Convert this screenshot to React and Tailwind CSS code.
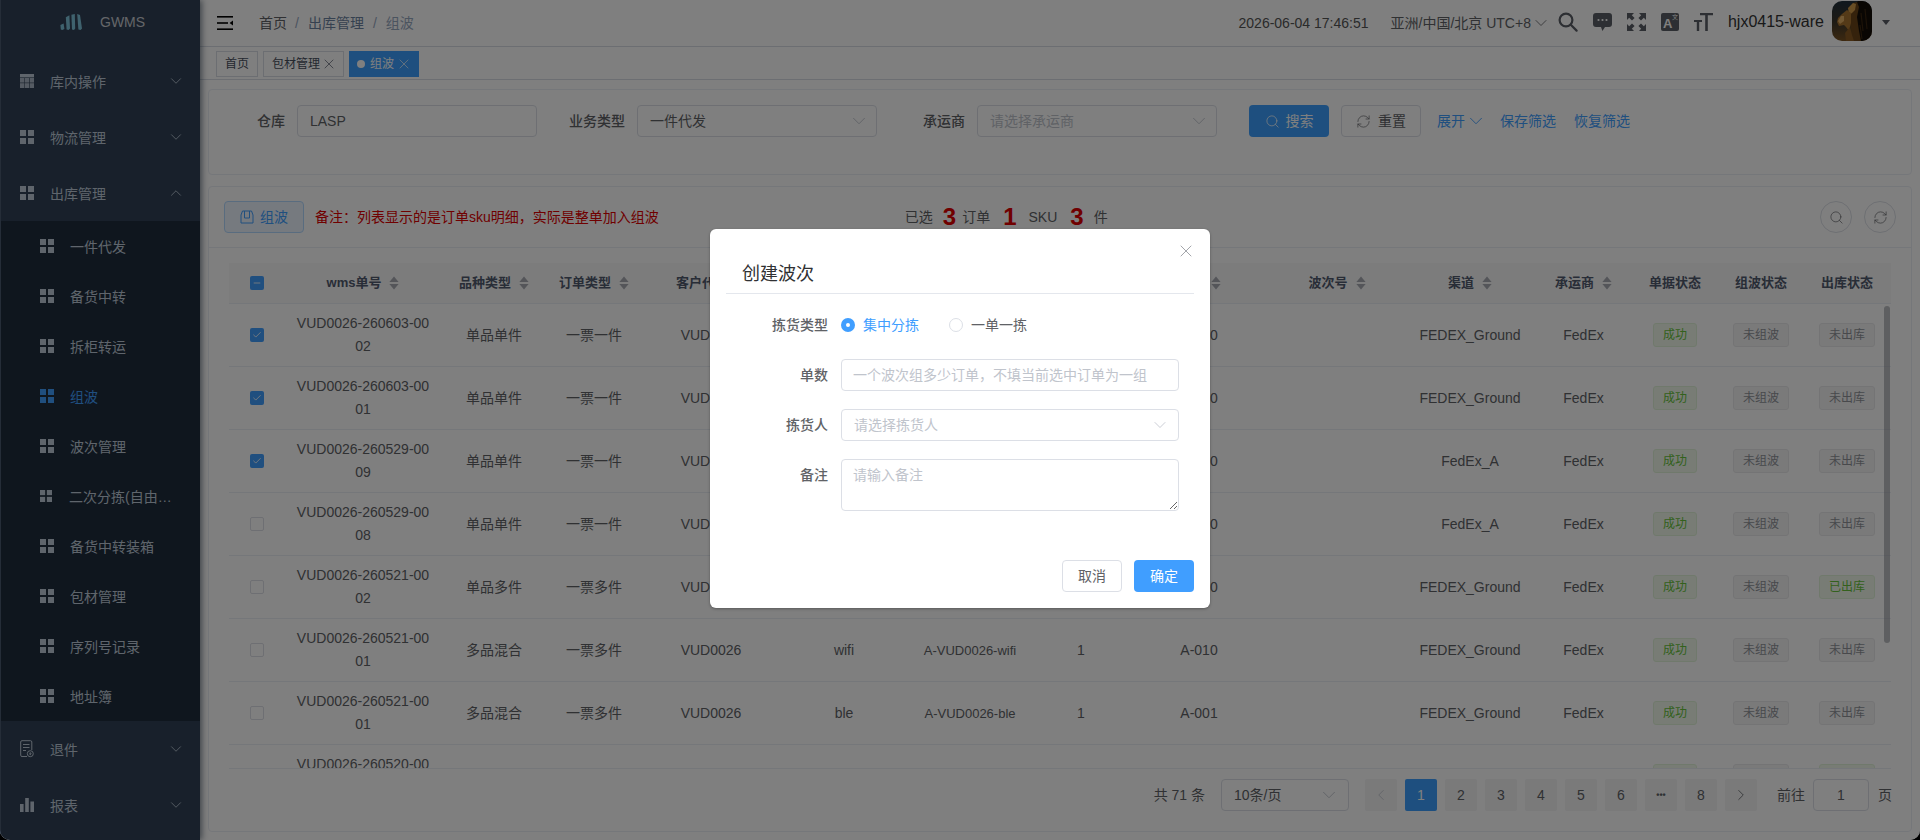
import { ChevronDown, ChevronUp, ChevronLeft, ChevronRight, Search, RefreshCw, X, Check, Minus } from 'lucide-react'

const rowGrid = "grid grid-cols-[56px_156px_106px_94px_140px_126px_126px_96px_140px_136px_130px_97px_86px_86px_86px]"

const subMenus = [
  { name: "一件代发" },
  { name: "备货中转" },
  { name: "拆柜转运" },
  { name: "组波", active: true },
  { name: "波次管理" },
  { name: "二次分拣(自由分拣)", small: true },
  { name: "备货中转装箱" },
  { name: "包材管理" },
  { name: "序列号记录" },
  { name: "地址簿" },
]

const heads = [
  ["wms单号", true], ["品种类型", true], ["订单类型", true], ["客户代码", true], ["商品名称", true], ["SKU", true],
  ["数量", true], ["库位", true], ["波次号", true], ["渠道", true], ["承运商", true], ["单据状态"], ["组波状态"], ["出库状态"],
]

const rows = [
  { no: "VUD0026-260603-0002", kind: "单品单件", type: "一票一件", name: "wifi", sku: "A-VUD0026-wifi", loc: "A-010", ch: "FEDEX_Ground", out: "未出库", on: true },
  { no: "VUD0026-260603-0001", kind: "单品单件", type: "一票一件", name: "wifi", sku: "A-VUD0026-wifi", loc: "A-010", ch: "FEDEX_Ground", out: "未出库", on: true },
  { no: "VUD0026-260529-0009", kind: "单品单件", type: "一票一件", name: "wifi", sku: "A-VUD0026-wifi", loc: "A-010", ch: "FedEx_A", out: "未出库", on: true },
  { no: "VUD0026-260529-0008", kind: "单品单件", type: "一票一件", name: "wifi", sku: "A-VUD0026-wifi", loc: "A-010", ch: "FedEx_A", out: "未出库" },
  { no: "VUD0026-260521-0002", kind: "单品多件", type: "一票多件", name: "wifi", sku: "A-VUD0026-wifi", loc: "A-010", ch: "FEDEX_Ground", out: "已出库" },
  { no: "VUD0026-260521-0001", kind: "多品混合", type: "一票多件", name: "wifi", sku: "A-VUD0026-wifi", loc: "A-010", ch: "FEDEX_Ground", out: "未出库" },
  { no: "VUD0026-260521-0001", kind: "多品混合", type: "一票多件", name: "ble", sku: "A-VUD0026-ble", loc: "A-001", ch: "FEDEX_Ground", out: "未出库" },
  { no: "VUD0026-260520-0001", kind: "多品混合", type: "一票多件", name: "ble", sku: "A-VUD0026-ble", loc: "A-001", ch: "FEDEX_Ground", out: "已出库" },
]

function GridIcon({ size = 14 }) {
  return (
    <svg width={size} height={size} viewBox="0 0 14 14" fill="currentColor" className="shrink-0">
      <rect x="0" y="0" width="6" height="6" />
      <rect x="8" y="0" width="6" height="6" />
      <rect x="0" y="8" width="6" height="6" />
      <rect x="8" y="8" width="6" height="6" />
    </svg>
  )
}

function TableIcon() {
  return (
    <svg width="14" height="14" viewBox="0 0 14 14" fill="currentColor" className="shrink-0">
      <rect x="0" y="0" width="14" height="3.4" />
      <rect x="0" y="4" width="4.3" height="4.6" opacity="0.85" />
      <rect x="4.8" y="4" width="4.3" height="4.6" opacity="0.85" />
      <rect x="9.7" y="4" width="4.3" height="4.6" opacity="0.85" />
      <rect x="0" y="9.2" width="4.3" height="4.8" opacity="0.85" />
      <rect x="4.8" y="9.2" width="4.3" height="4.8" opacity="0.85" />
      <rect x="9.7" y="9.2" width="4.3" height="4.8" opacity="0.85" />
    </svg>
  )
}

function ReturnIcon() {
  return (
    <svg width="14" height="18" viewBox="0 0 14 18" fill="none" stroke="currentColor" strokeWidth="1" className="shrink-0">
      <path d="M7 16.5H2a1.3 1.3 0 0 1-1.3-1.3V2A1.3 1.3 0 0 1 2 .7h8.5A1.3 1.3 0 0 1 11.8 2v8" />
      <path d="M3 4.5h6.5M3 7.5h6.5M3 10.5h3" />
      <circle cx="10.3" cy="13.7" r="3" />
      <path d="M10.3 12.3v2.4M9.2 13.6l1.1 1.1 1.1-1.1" />
    </svg>
  )
}

function BarsIcon() {
  return (
    <svg width="14" height="14" viewBox="0 0 14 14" fill="currentColor" className="shrink-0">
      <rect x="0" y="6" width="3.6" height="8" />
      <rect x="5.2" y="0" width="3.6" height="14" />
      <rect x="10.4" y="3.5" width="3.6" height="10.5" />
    </svg>
  )
}

function SortIcon() {
  return (
    <svg width="10" height="14" viewBox="0 0 10 14" fill="#a8abb2" className="shrink-0">
      <path d="M5 0.5 9.6 6H0.4Z" />
      <path d="M5 13.5 9.6 8H0.4Z" />
    </svg>
  )
}

function MenuItem({ icon, name, open }) {
  return (
    <div className="h-14 pl-[19px] pr-[15px] flex items-center text-[#bfcbd9] text-sm">
      <span className="w-[30px] flex items-center">{icon}</span>
      <span className="flex-1 pt-[2px]">{name}</span>
      {open ? <ChevronUp size={18} strokeWidth={1.1} /> : <ChevronDown size={18} strokeWidth={1.1} />}
    </div>
  )
}

function Sidebar() {
  return (
    <div className="w-[200px] shrink-0 h-full bg-[#304156] shadow-[2px_0_6px_rgba(0,21,41,0.5)] z-[1] border-l border-[#4a5a70]">
      <div className="h-[53px] flex items-start pt-[14px] pl-[59px]">
        <svg width="22" height="16" viewBox="0 0 22 16" fill="#7fc4dc">
          <path d="M0.4 11 3.6 9.4 4.4 15 2.4 16 .8 15.4Z" />
          <path d="M5.8 3.2 9.4 1.2 10 14.6 8.6 16 6.6 15.4Z" />
          <path d="M11.4 0.8 14.8 0 15.2 14.6 14 16 12 15.4Z" />
          <path d="M17.2 0 20 1 22 14.6 20.6 16 18.4 15.4Z" />
        </svg>
        <span className="ml-[18px] text-sm leading-[16px] text-[#c8ccd2]">GWMS</span>
      </div>
      <MenuItem icon={<TableIcon />} name="库内操作" />
      <MenuItem icon={<GridIcon />} name="物流管理" />
      <MenuItem icon={<GridIcon />} name="出库管理" open />
      <div className="bg-[#1f2d3d]">
        {subMenus.map((m) => (
          <div
            key={m.name}
            className={`h-[50px] pl-[39px] flex items-center text-sm ${m.active ? "text-[#409eff]" : "text-[#bfcbd9]"}`}
          >
            <span className="w-[30px] flex items-center"><GridIcon size={m.small ? 12 : 14} /></span>
            <span className={m.small ? "w-[104px] -ml-px pt-[2px] truncate" : "pt-[2px]"}>{m.name}</span>
          </div>
        ))}
      </div>
      <MenuItem icon={<ReturnIcon />} name="退件" />
      <MenuItem icon={<BarsIcon />} name="报表" />
    </div>
  )
}

function HeaderIcons() {
  const arrow = "M0 0h7L4.8 2.2 7.6 5 5 7.6 2.2 4.8 0 7Z"
  return (
    <div className="flex items-center gap-[15px] text-[#5a5e66]">
      <svg width="20" height="20" viewBox="0 0 20 20" fill="none" stroke="currentColor" strokeWidth="2.2">
        <circle cx="8" cy="8" r="6.4" />
        <path d="M12.8 12.8 18.6 18.6" strokeLinecap="round" />
      </svg>
      <svg width="19" height="20" viewBox="0 0 19 20" fill="currentColor">
        <path d="M3 1h13a3 3 0 0 1 3 3v8a3 3 0 0 1-3 3h-4l-2.6 4-1.4-4H3a3 3 0 0 1-3-3V4a3 3 0 0 1 3-3Z" />
        <circle cx="5.5" cy="8" r="1.1" fill="#fff" />
        <circle cx="9.5" cy="8" r="1.1" fill="#fff" />
        <circle cx="13.5" cy="8" r="1.1" fill="#fff" />
      </svg>
      <svg width="19" height="18" viewBox="0 0 19 18" fill="currentColor">
        <path d={arrow} />
        <path d={arrow} transform="translate(19 0) scale(-1 1)" />
        <path d={arrow} transform="translate(0 18) scale(1 -1)" />
        <path d={arrow} transform="translate(19 18) scale(-1 -1)" />
      </svg>
      <div className="relative w-[18px] h-[18px] rounded-[2px] bg-current">
        <span className="absolute left-[2px] top-[3px] text-[13px] leading-[15px] font-bold text-white">A</span>
        <span className="absolute right-[1px] top-[1px] text-[6px] leading-[7px] text-white">文</span>
      </div>
      <svg width="19" height="18" viewBox="0 0 19 18" fill="currentColor">
        <path d="M6 0h13v2.2h-5.2V18h-2.6V2.2H6Z" />
        <path d="M0 7h8v2H5.2v9H2.8V9H0Z" />
      </svg>
    </div>
  )
}

function Avatar() {
  return (
    <svg width="40" height="40" viewBox="0 0 40 40" className="rounded-[10px] shrink-0">
      <defs>
        <linearGradient id="sky" x1="0" y1="0" x2="0" y2="1">
          <stop offset="0" stopColor="#22303c" />
          <stop offset="0.5" stopColor="#38342a" />
          <stop offset="1" stopColor="#7a5222" />
        </linearGradient>
      </defs>
      <rect width="40" height="40" fill="url(#sky)" />
      <path d="M40 0H26l-4 6-2 10 1 12 3 12h16Z" fill="#120c07" />
      <path d="M21 2 25 1 27 6 25 16 27 30 29 40H21L19 28 17 16 17 8Z" fill="#6a4518" />
      <path d="M16 7 21 2 24 3 23 9 20 12 17 14Z" fill="#d19a48" />
      <path d="M15 9 19 12 19 22 17 30 14 26 12 24 7 25 5 21 6 17 10 13Z" fill="#a87430" />
      <path d="M6 20 9 15 12 15 12 20 8 23Z" fill="#e2b066" />
      <path d="M18 26 20 34 22 40H14L13 32Z" fill="#8a5a22" />
      <path d="M29 12 31 30M33 8 35 28M28 24 30 38" stroke="#3a2610" strokeWidth="1.2" fill="none" />
    </svg>
  )
}

function Tag({ text, green }) {
  return (
    <span className={`h-6 px-[9px] inline-flex items-center rounded-[3px] border text-xs whitespace-nowrap ${green ? "bg-[#f0f9eb] border-[#e1f3d8] text-[#67c23a]" : "bg-[#f4f4f5] border-[#e9e9eb] text-[#909399]"}`}>
      {text}
    </span>
  )
}

function Box({ on, part }) {
  if (part) {
    return (
      <span className="w-[14px] h-[14px] rounded-[2px] bg-[#409eff] flex items-center justify-center text-white">
        <Minus size={10} strokeWidth={2} />
      </span>
    )
  }
  if (on) {
    return (
      <span className="w-[14px] h-[14px] rounded-[2px] bg-[#409eff] flex items-center justify-center text-white">
        <Check size={10} strokeWidth={2} />
      </span>
    )
  }
  return <span className="w-[14px] h-[14px] rounded-[2px] border border-[#dcdfe6] bg-white" />
}

function FilterBar() {
  return (
    <div className="h-[86px] border border-[#ebeef5] rounded-[4px] pt-[15px] flex items-start text-sm text-[#606266]">
      <span className="w-[76px] h-8 leading-8 text-right font-medium">仓库</span>
      <input defaultValue="LASP" className="ml-3 w-[240px] h-8 px-3 border border-[#dcdfe6] rounded-[4px] outline-none text-[#606266]" />
      <span className="ml-8 h-8 leading-8 font-medium">业务类型</span>
      <div className="ml-3 w-[240px] h-8 pl-3 pr-[6px] border border-[#dcdfe6] rounded-[4px] flex items-center justify-between">
        一件代发 <ChevronDown size={22} strokeWidth={1} className="text-[#c0c4cc]" />
      </div>
      <span className="ml-[46px] h-8 leading-8 font-medium">承运商</span>
      <div className="ml-3 w-[240px] h-8 pl-3 pr-[6px] border border-[#dcdfe6] rounded-[4px] flex items-center justify-between text-[#c0c4cc]">
        请选择承运商 <ChevronDown size={22} strokeWidth={1} />
      </div>
      <button className="ml-8 w-20 h-8 rounded-[4px] bg-[#3c9fff] text-white flex items-center justify-center gap-[6px]">
        <Search size={15} strokeWidth={1.2} /> 搜索
      </button>
      <button className="ml-3 w-20 h-8 rounded-[4px] border border-[#dcdfe6] text-[#606266] flex items-center justify-center gap-[7px]">
        <RefreshCw size={15} strokeWidth={1.1} /> 重置
      </button>
      <div className="ml-4 h-8 flex items-center text-[#409eff]">
        展开 <ChevronDown size={22} strokeWidth={1} />
        <span className="ml-[13px]">保存筛选</span>
        <span className="ml-[18px]">恢复筛选</span>
      </div>
    </div>
  )
}

function OrderTable() {
  return (
    <div className="relative h-[506px] overflow-hidden">
      <div className={`${rowGrid} h-[41px] bg-[#f8f8f9] border-b border-[#ebeef5] items-center text-[13px] font-semibold text-[#515a6e]`}>
        <span className="flex justify-center"><Box part /></span>
        {heads.map(([h, sort]) => (
          <span key={h} className="flex items-center justify-center gap-2 whitespace-nowrap">
            {h} {sort && <SortIcon />}
          </span>
        ))}
      </div>
      <div className="h-[465px] overflow-hidden border-b border-[#ebeef5]">
        {rows.map((r, i) => (
          <div key={i} className={`${rowGrid} h-[63px] border-b border-[#ebeef5] items-center text-sm text-[#606266] text-center leading-[23px]`}>
            <span className="flex justify-center"><Box on={r.on} /></span>
            <span className="px-[10px] break-all">{r.no}</span>
            <span>{r.kind}</span>
            <span>{r.type}</span>
            <span>VUD0026</span>
            <span>{r.name}</span>
            <span className="text-[13px]">{r.sku}</span>
            <span>1</span>
            <span>{r.loc}</span>
            <span></span>
            <span>{r.ch}</span>
            <span>FedEx</span>
            <span><Tag text="成功" green /></span>
            <span><Tag text="未组波" /></span>
            <span><Tag text={r.out} green={r.out === "已出库"} /></span>
          </div>
        ))}
      </div>
      {/* scrollbar */}
      <div className="absolute right-px top-[43px] w-[6px] h-[337px] rounded-[3px] bg-[#909399]/60" />
    </div>
  )
}

function Pagination() {
  const pages = ["1", "2", "3", "4", "5", "6", "•••", "8"]
  return (
    <div className="h-[61px] pt-[10px] pr-[19px] flex items-start justify-end text-sm text-[#606266]">
      <span className="h-8 leading-8">共 71 条</span>
      <div className="ml-4 w-32 h-8 pl-3 pr-2 border border-[#dcdfe6] rounded-[4px] flex items-center justify-between">
        10条/页 <ChevronDown size={22} strokeWidth={1} className="text-[#c0c4cc]" />
      </div>
      <div className="ml-4 flex gap-2">
        <span className="w-8 h-8 bg-[#f4f4f5] rounded-[2px] flex items-center justify-center text-[#c0c4cc]"><ChevronLeft size={18} strokeWidth={1.1} /></span>
        {pages.map((p, i) => (
          <span
            key={p}
            className={`w-8 h-8 rounded-[2px] flex items-center justify-center ${i === 0 ? "bg-[#3c9fff] text-white" : "bg-[#f4f4f5] text-[#606266]"} ${p === "•••" ? "text-[9px] font-bold" : ""}`}
          >
            {p}
          </span>
        ))}
        <span className="w-8 h-8 bg-[#f4f4f5] rounded-[2px] flex items-center justify-center text-[#606266]"><ChevronRight size={18} strokeWidth={1.1} /></span>
      </div>
      <span className="ml-5 h-8 leading-8">前往</span>
      <span className="ml-2 w-14 h-8 border border-[#dcdfe6] rounded-[4px] flex items-center justify-center">1</span>
      <span className="ml-[9px] h-8 leading-8">页</span>
    </div>
  )
}

function WaveDialog() {
  return (
    <div className="absolute inset-0 z-10 bg-black/50 flex justify-center items-start pt-[229px]">
      <div className="relative w-[500px] h-[379px] bg-white rounded-[6px] shadow-[0_1px_3px_rgba(0,0,0,0.3)] px-4 text-sm text-[#606266]">
        <X size={20} strokeWidth={1} className="absolute right-[14px] top-[12px] text-[#909399]" />
        <div className="h-[65px] pt-[33px] pl-4 border-b border-[#e4e7ed] text-lg leading-6 text-[#303133]">创建波次</div>
        <div className="flex items-center h-8 mt-[15px]">
          <span className="w-[102px] text-right font-medium">拣货类型</span>
          <span className="ml-[13px] w-[14px] h-[14px] rounded-full bg-[#409eff] flex items-center justify-center">
            <span className="w-1 h-1 rounded-full bg-white" />
          </span>
          <span className="ml-2 text-[#409eff]">集中分拣</span>
          <span className="ml-[30px] w-[14px] h-[14px] rounded-full border border-[#dcdfe6]" />
          <span className="ml-2">一单一拣</span>
        </div>
        <div className="flex items-center mt-[18px]">
          <span className="w-[102px] text-right font-medium">单数</span>
          <input placeholder="一个波次组多少订单，不填当前选中订单为一组" className="ml-[13px] w-[338px] h-8 px-[11px] border border-[#dcdfe6] rounded-[4px] outline-none placeholder:text-[#c0c4cc]" />
        </div>
        <div className="flex items-center mt-[18px]">
          <span className="w-[102px] text-right font-medium">拣货人</span>
          <div className="ml-[13px] w-[338px] h-8 pl-3 pr-2 border border-[#dcdfe6] rounded-[4px] flex items-center justify-between text-[#c0c4cc]">
            请选择拣货人 <ChevronDown size={20} strokeWidth={1} />
          </div>
        </div>
        <div className="flex items-start mt-[18px]">
          <span className="w-[102px] text-right font-medium leading-8">备注</span>
          <textarea placeholder="请输入备注" className="block ml-[13px] w-[338px] h-[52px] px-[11px] py-[5px] border border-[#dcdfe6] rounded-[4px] outline-none placeholder:text-[#c0c4cc]" />
        </div>
        <div className="flex justify-end gap-3 mt-[49px]">
          <button className="w-[60px] h-8 rounded-[4px] border border-[#dcdfe6] text-[#606266]">取消</button>
          <button className="w-[60px] h-8 rounded-[4px] bg-[#409eff] text-white">确定</button>
        </div>
      </div>
    </div>
  )
}

export default function App() {
  return (
    <div className="w-[1920px] h-[840px] bg-black [font-family:'Liberation_Sans','Noto_Sans_CJK_SC',sans-serif]">
      <div className="relative w-full h-full overflow-hidden rounded-b-[10px] bg-white flex">
        <Sidebar />
        <div className="flex-1 min-w-0">
          {/* top bar */}
          <div className="h-[47px] border-b border-[#d8dce5] flex items-center pl-[17px] pb-px text-sm">
            <svg width="16" height="14" viewBox="0 0 16 14" fill="#000">
              <rect width="16" height="1.6" />
              <rect y="6.2" width="11" height="1.6" />
              <rect y="12.4" width="16" height="1.6" />
              <path d="M16 4.4V9.6L12.6 7Z" />
            </svg>
            <span className="ml-[26px] text-[#606266]">首页</span>
            <span className="ml-2 mr-[9px] text-[#97a8be]">/</span>
            <span className="text-[#6c83a0]">出库管理</span>
            <span className="mx-[9px] text-[#97a8be]">/</span>
            <span className="text-[#97a8be]">组波</span>
            <div className="ml-auto self-start h-[42px] flex items-center pr-[30px]">
              <span className="mt-1 text-[#555]">2026-06-04 17:46:51</span>
              <span className="mt-1 ml-[22px] text-[#606266]">亚洲/中国/北京 UTC+8</span>
              <ChevronDown size={20} strokeWidth={1} className="mt-1 text-[#606266]" />
              <span className="ml-[7px] mt-[2px]"><HeaderIcons /></span>
              <span className="ml-[15px] mt-[2px] text-base text-[#333]">hjx0415-ware</span>
              <span className="ml-2"><Avatar /></span>
              <span className="ml-[10px] mt-[2px] w-0 h-0 border-x-[4px] border-x-transparent border-t-[5px] border-t-[#5a5e66]" />
            </div>
          </div>
          {/* tabs */}
          <div className="h-[33px] border-b border-[#d8dce5] pt-[4px] pl-4 flex gap-[5px] text-xs text-[#495060]">
            <span className="h-[26px] px-[8px] border border-[#d8dce5] flex items-center">首页</span>
            <span className="h-[26px] pl-[8px] pr-[6px] border border-[#d8dce5] flex items-center">包材管理<X size={16} strokeWidth={1} className="ml-px" /></span>
            <span className="h-[26px] pl-[8px] pr-[7px] bg-[#3c9fff] text-white flex items-center">
              <span className="w-2 h-2 rounded-full bg-white mr-[5px]" />组波<X size={16} strokeWidth={1} className="ml-[2px]" />
            </span>
          </div>
          <div className="px-2 pt-[9px]">
            <FilterBar />
            <div className="mt-[11px] h-[646px] border border-[#ebeef5] rounded-[4px]">
              <div className="h-[61px] px-[15px] pt-[14px] border-b border-[#ebeef5] flex items-start relative">
                <button className="w-20 h-8 rounded-[4px] bg-[#ecf5ff] border border-[#b3d8ff] text-[#409eff] text-sm flex items-center justify-center gap-[6px]">
                  <svg width="14" height="14" viewBox="0 0 14 14" fill="none" stroke="currentColor" strokeWidth="1">
                    <path d="M1 5V13H13V5L11.5 1H2.5Z" />
                    <path d="M4.5 1V8H9.5V1" />
                  </svg>
                  组波
                </button>
                <span className="ml-[11px] h-8 leading-8 text-sm text-[#e00000]">备注：列表显示的是订单sku明细，实际是整单加入组波</span>
                <div className="ml-[246px] h-8 flex items-center text-sm text-[#606266] whitespace-nowrap">
                  已选
                  <b className="ml-[10px] mr-[6px] text-2xl text-[#e00000]">3</b>
                  订单
                  <b className="ml-[13px] mr-[12px] text-2xl text-[#e00000]">1</b>
                  SKU
                  <b className="ml-[13px] mr-[10px] text-2xl text-[#e00000]">3</b>
                  件
                </div>
                <div className="ml-auto flex gap-3">
                  <span className="w-8 h-8 rounded-full border border-[#dcdfe6] flex items-center justify-center text-[#606266]"><Search size={15} strokeWidth={1.1} /></span>
                  <span className="w-8 h-8 rounded-full border border-[#dcdfe6] flex items-center justify-center text-[#606266]"><RefreshCw size={15} strokeWidth={1.1} /></span>
                </div>
              </div>
              <div className="px-5 pt-[15px]">
                <OrderTable />
              </div>
              <Pagination />
            </div>
          </div>
        </div>
        <WaveDialog />
      </div>
    </div>
  )
}
